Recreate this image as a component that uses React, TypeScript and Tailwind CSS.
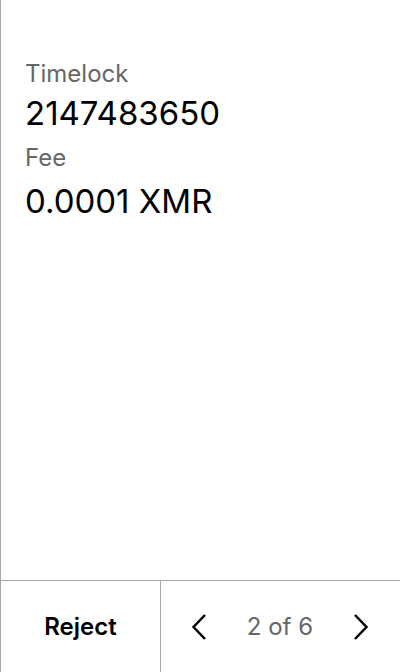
import React from "react";

export default function App() {
  return (
    <div
      className="w-[400px] h-[672px] flex flex-col bg-white border-l border-[#a8a8a8] text-black"
      style={{ fontFamily: "Inter, 'Noto Sans', sans-serif" }}
    >
      <div className="flex-1 pt-[58px] pl-[24px] flex flex-col">
        <div className="text-[24px] leading-[32px] text-[#666666]">Timelock</div>
        <div className="text-[33px] leading-[44px] mt-[1px]">2147483650</div>
        <div className="text-[24px] leading-[32px] text-[#666666] mt-[7px]">Fee</div>
        <div className="text-[33px] leading-[44px] mt-[5px]">0.0001 XMR</div>
      </div>
      <div className="h-[92px] border-t border-[#a8a8a8] flex">
        <div className="w-[159px] flex items-center justify-center text-[24px] font-semibold">
          Reject
        </div>
        <div className="flex-1 border-l border-[#a8a8a8] flex items-center justify-between pl-[31px] pr-[32px]">
          <svg width="14" height="26" viewBox="0 0 14 26" fill="none" stroke="black" strokeWidth="2.5">
            <path d="M13 1 L1.5 13 L13 25" />
          </svg>
          <span className="text-[24px] text-[#666666]">2 of 6</span>
          <svg width="14" height="26" viewBox="0 0 14 26" fill="none" stroke="black" strokeWidth="2.5">
            <path d="M1 1 L12.5 13 L1 25" />
          </svg>
        </div>
      </div>
    </div>
  );
}
